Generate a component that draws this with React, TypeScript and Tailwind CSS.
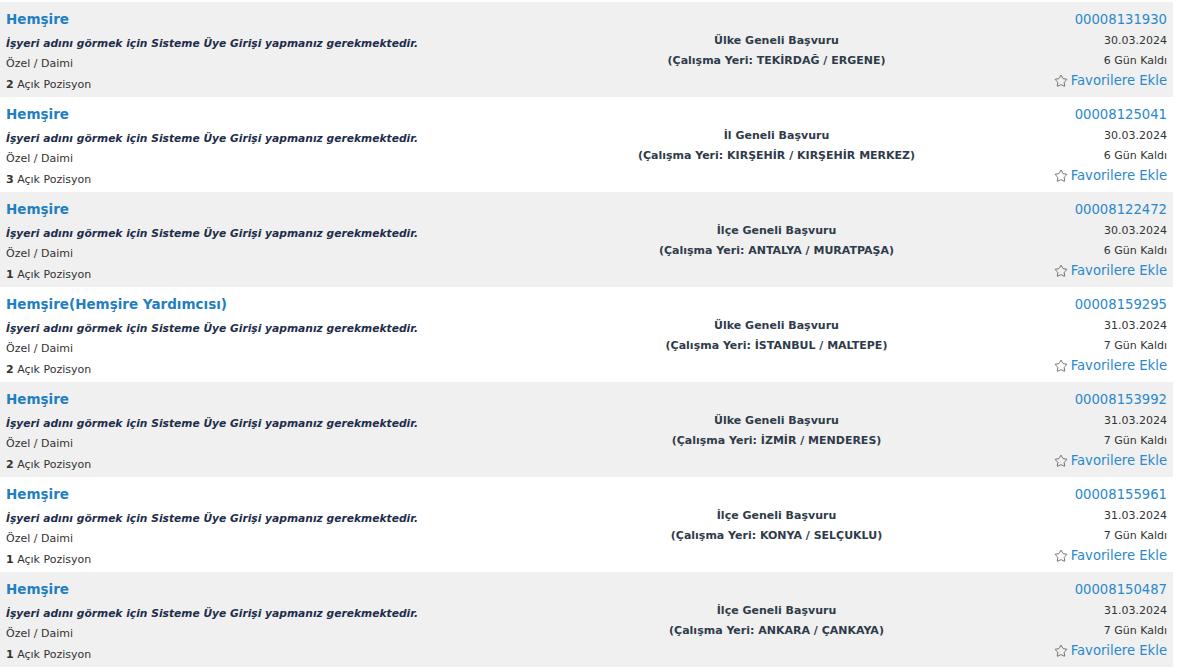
import { Star } from 'lucide-react';

type Job = {
    title: string;
    scope: string;
    place: string;
    no: string;
    date: string;
    left: string;
    count: number;
};

const JOBS: Job[] = [
    { title: 'Hemşire', scope: 'Ülke Geneli Başvuru', place: 'TEKİRDAĞ / ERGENE', no: '00008131930', date: '30.03.2024', left: '6 Gün Kaldı', count: 2 },
    { title: 'Hemşire', scope: 'İl Geneli Başvuru', place: 'KIRŞEHİR / KIRŞEHİR MERKEZ', no: '00008125041', date: '30.03.2024', left: '6 Gün Kaldı', count: 3 },
    { title: 'Hemşire', scope: 'İlçe Geneli Başvuru', place: 'ANTALYA / MURATPAŞA', no: '00008122472', date: '30.03.2024', left: '6 Gün Kaldı', count: 1 },
    { title: 'Hemşire(Hemşire Yardımcısı)', scope: 'Ülke Geneli Başvuru', place: 'İSTANBUL / MALTEPE', no: '00008159295', date: '31.03.2024', left: '7 Gün Kaldı', count: 2 },
    { title: 'Hemşire', scope: 'Ülke Geneli Başvuru', place: 'İZMİR / MENDERES', no: '00008153992', date: '31.03.2024', left: '7 Gün Kaldı', count: 2 },
    { title: 'Hemşire', scope: 'İlçe Geneli Başvuru', place: 'KONYA / SELÇUKLU', no: '00008155961', date: '31.03.2024', left: '7 Gün Kaldı', count: 1 },
    { title: 'Hemşire', scope: 'İlçe Geneli Başvuru', place: 'ANKARA / ÇANKAYA', no: '00008150487', date: '31.03.2024', left: '7 Gün Kaldı', count: 1 },
];

const JobRow = ({ job, odd }: { job: Job; odd: boolean }) => {
    return (
        <div className={`flex h-[95px] ${odd ? 'bg-[#f0f0f0]' : 'bg-white'}`}>
            {/* left: title + info */}
            <div className="w-[560px] pl-[6px] pt-[7px]">
                <a className="block text-[13.5px] font-bold leading-[20px] text-[#1f7fc1]">{job.title}</a>
                <div className="mt-[5px] text-[10.7px] font-bold italic leading-[20px] text-[#1e2d4a]">
                    İşyeri adını görmek için Sisteme Üye Girişi yapmanız gerekmektedir.
                </div>
                <div className="text-[11px] leading-[20px] text-[#333]">Özel / Daimi</div>
                <div className="text-[11px] leading-[21px] text-[#333]">
                    <b>{job.count}</b> Açık Pozisyon
                </div>
            </div>

            {/* middle: application scope */}
            <div className="flex-1 pt-[29px] text-center text-[11px] font-bold leading-[20px] text-[#2f3b4a]">
                <div>{job.scope}</div>
                <div>(Çalışma Yeri: {job.place})</div>
            </div>

            {/* right: number, date, favorite */}
            <div className="w-[180px] pr-[6px] pt-[7px] text-right">
                <div className="text-[13.2px] leading-[22px] text-[#2a88cc]">{job.no}</div>
                <div className="text-[11px] leading-[20px] text-[#333]">{job.date}</div>
                <div className="text-[11px] leading-[19px] text-[#333]">{job.left}</div>
                <div className="flex items-center justify-end gap-[3px] text-[13.2px] leading-[22px] text-[#2a88cc]">
                    <Star className="h-[14px] w-[14px] text-[#555]" strokeWidth={1.4} />
                    <span>Favorilere Ekle</span>
                </div>
            </div>
        </div>
    );
};

export default function App() {
    return (
        <div className="min-h-screen bg-white pt-[2px] font-['DejaVu_Sans',Verdana,sans-serif]">
            <div className="w-[1173px]">
                {JOBS.map((job, i) => (
                    <JobRow key={job.no} job={job} odd={i % 2 === 0} />
                ))}
            </div>
        </div>
    );
}
